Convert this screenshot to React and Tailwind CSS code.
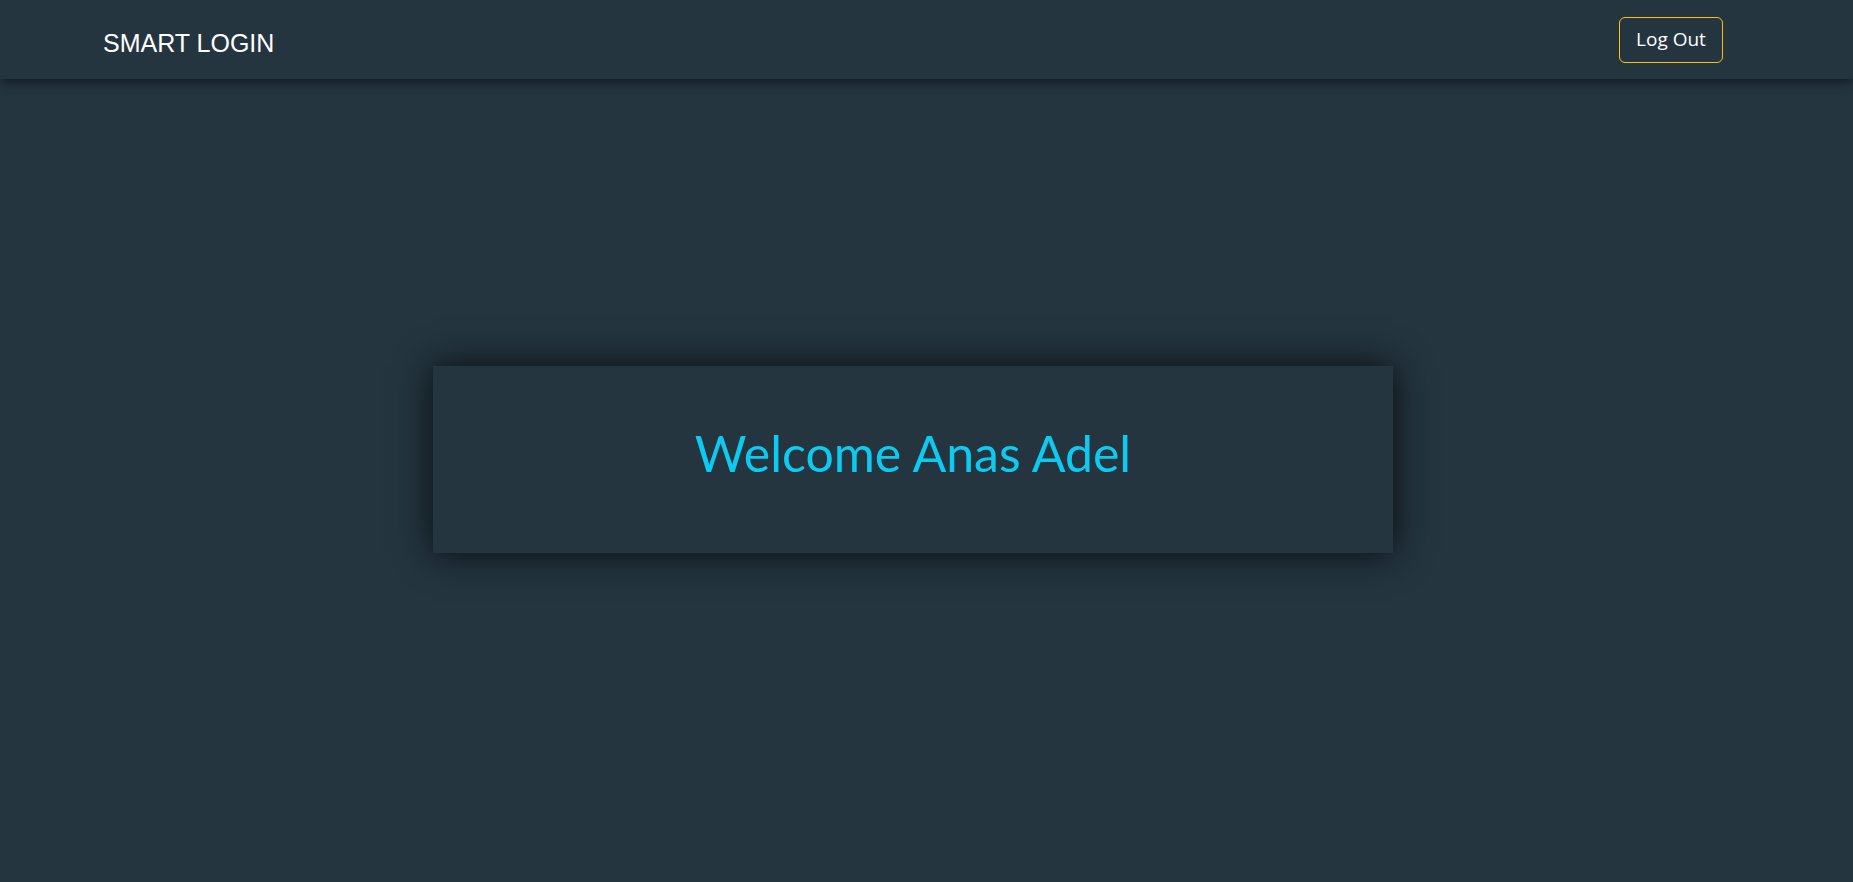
import React from 'react';

const App = () => {
  return (
    <div className="min-h-screen bg-[#243540]" style={{ fontFamily: '"Open Sans", "Noto Sans", sans-serif' }}>
      <nav className="relative z-10 h-[79px] flex items-center justify-between pl-[103px] pr-[130px] bg-[#243540] shadow-[0_4px_10px_rgba(0,0,0,0.45)]">
        <span className="text-white text-[25px] mt-[8px]" style={{ fontFamily: '"Liberation Sans", Arial, sans-serif' }}>SMART LOGIN</span>
        <button className="h-[46px] w-[104px] border border-[#ffc107] rounded-md text-white text-[19px]">Log Out</button>
      </nav>
      <main className="pt-[287px] pl-[433px]">
        <div className="w-[960px] h-[187px] bg-[#243540] shadow-[0_0_35px_rgba(0,0,0,0.8)] flex items-center justify-center">
          <h1 className="text-[#0dcaf0] text-[50px] font-normal leading-none -mt-[14px]" style={{ fontFamily: 'Lato, "Open Sans", sans-serif' }}>Welcome Anas Adel</h1>
        </div>
      </main>
    </div>
  );
};

export default App;
